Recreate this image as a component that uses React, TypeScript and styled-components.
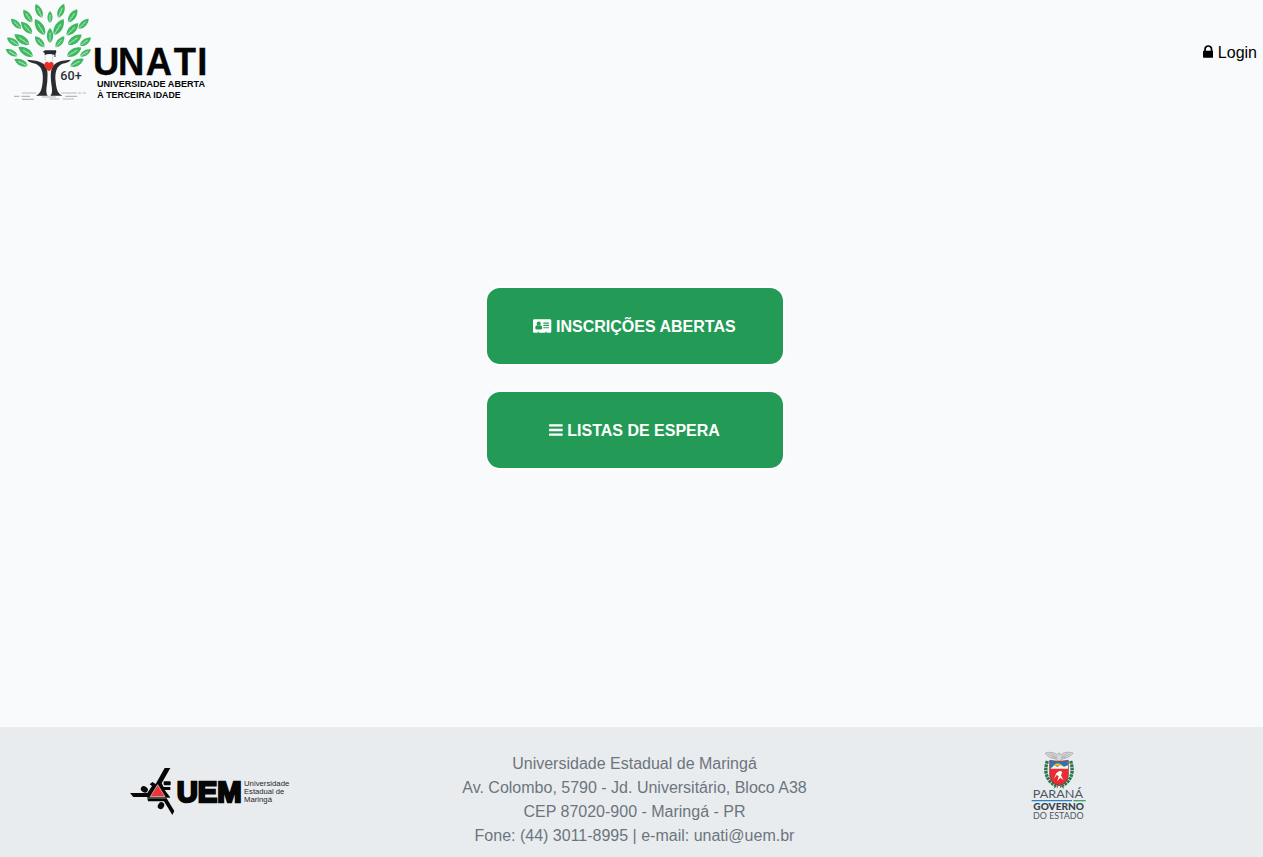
import React from "react";
import styled, { createGlobalStyle } from "styled-components";

const GlobalStyle = createGlobalStyle`
  * { box-sizing: border-box; }
  body {
    margin: 0;
    background: #f8fafc;
    font: 16px/24px "Liberation Sans", Arial, sans-serif;
  }
`;

const Page = styled.div`
  display: flex;
  flex-direction: column;
  min-height: 857px;
  overflow: hidden;
`;

const Header = styled.header`
  display: flex;
  justify-content: space-between;
  align-items: center;
  height: 105px;
  padding: 0 6px 0 4px;
`;

const LoginLink = styled.a`
  color: #000;
  text-decoration: none;
`;

const Main = styled.main`
  flex: 1;
  display: flex;
  flex-direction: column;
  align-items: center;
  gap: 24px;
  padding: 181px 0 0 7px;
`;

const ActionButton = styled.button`
  width: 300px;
  height: 80px;
  padding: 2px 1px 0 0;
  border: 2px solid #fff;
  border-radius: 15px;
  background: #239b56;
  color: #fff;
  font: bold 16px/24px "Liberation Sans", Arial, sans-serif;
  cursor: pointer;
`;

const Footer = styled.footer`
  display: grid;
  grid-template-columns: repeat(3, 425px);
  height: 130px;
  padding-top: 24px;
  margin-left: -3px;
  width: 1275px;
  background: #e9ecef;
  color: #6c757d;
  text-align: center;
`;

const FooterCell = styled.div<{ $top?: number }>`
  padding-top: ${(p) => p.$top ?? 0}px;
`;

const Glyph = styled.svg`
  height: 16px;
  vertical-align: -2.29px;
  fill: currentColor;
`;

const Drawing = styled.svg`
  display: block;
  overflow: visible;
`;

const CenteredDrawing = styled(Drawing)`
  margin: 0 auto;
`;

const LockIcon = () => (
  <Glyph viewBox="0 0 1152 1792" width="10.6" preserveAspectRatio="none">
    <path d="M320 768h512v-192q0-106-75-181t-181-75-181 75-75 181v192zm832 96v576q0 40-28 68t-68 28h-960q-40 0-68-28t-28-68v-576q0-40 28-68t68-28h32v-192q0-184 132-316t316-132 316 132 132 316v192h32q40 0 68 28t28 68z" />
  </Glyph>
);

const CardIcon = () => (
  <Glyph viewBox="0 0 2048 1792" width="18.29" preserveAspectRatio="none">
    <path d="M1024 1131q0-64-9-117.500t-29.500-103-60.500-78-97-28.500q-6 4-30 18t-37.500 21.500-35.500 17.500-43 14.500-42 4.500-42-4.500-43-14.500-35.500-17.500-37.500-21.500-30-18q-57 0-97 28.500t-60.500 78-29.500 103-9 117.500 37 106.500 91 42.500h512q54 0 91-42.500t37-106.500zm-157-520q0-94-66.500-160.500t-160.500-66.500-160.500 66.500-66.500 160.500 66.500 160.500 160.500 66.500 160.500-66.500 66.500-160.500zm925 509v-64q0-14-9-23t-23-9h-576q-14 0-23 9t-9 23v64q0 14 9 23t23 9h576q14 0 23-9t9-23zm0-260v-56q0-15-10.500-25.500t-25.500-10.500h-568q-15 0-25.500 10.500t-10.500 25.500v56q0 15 10.500 25.500t25.500 10.500h568q15 0 25.500-10.500t10.500-25.500zm0-252v-64q0-14-9-23t-23-9h-576q-14 0-23 9t-9 23v64q0 14 9 23t23 9h576q14 0 23-9t9-23zm256-320v1216q0 66-47 113t-113 47h-352v-96q0-14-9-23t-23-9h-64q-14 0-23 9t-9 23v96h-768v-96q0-14-9-23t-23-9h-64q-14 0-23 9t-9 23v96h-352q-66 0-113-47t-47-113v-1216q0-66 47-113t113-47h1728q66 0 113 47t47 113z" />
  </Glyph>
);

const BarsIcon = () => (
  <Glyph viewBox="0 0 1536 1792" width="13.71" preserveAspectRatio="none">
    {[256, 768, 1280].map((y) => (
      <rect key={y} x="0" y={y} width="1536" height="256" rx="64" />
    ))}
  </Glyph>
);

// Each leaf is [tipX, tipY, stemX, stemY].
const leaves = [
  [107, 12, 126, 53], [70, 29, 96, 67], [33, 56, 63, 86], [150, 33, 150, 69],
  [192, 11, 175, 53], [232, 28, 205, 67], [266, 56, 236, 86], [105, 57, 134, 105],
  [191, 57, 162, 105], [150, 84, 150, 129], [63, 65, 96, 101], [235, 70, 200, 106],
  [21, 113, 57, 137], [43, 103, 88, 134], [105, 109, 133, 142], [193, 109, 167, 142],
  [245, 104, 204, 134], [273, 113, 240, 137], [17, 148, 52, 168], [55, 141, 99, 169],
  [43, 178, 83, 198], [244, 143, 201, 169], [273, 148, 240, 169], [251, 177, 211, 199],
];

const Leaf = ({ points }: { points: number[] }) => {
  const [tx, ty, sx, sy] = points;
  const dx = sx - tx;
  const dy = sy - ty;
  const length = Math.hypot(dx, dy);
  const angle = (Math.atan2(dy, dx) * 180) / Math.PI;
  const w = length * 0.25;
  return (
    <g transform={`translate(${tx} ${ty}) rotate(${angle})`}>
      <path
        d={`M0 0C${length * 0.3} ${-w * 1.15} ${length * 0.8} ${-w * 1.1} ${length} 0C${length * 0.8} ${w * 1.1} ${length * 0.3} ${w * 1.15} 0 0Z`}
        fill="#3fb960"
      />
      <path d={`M${length * 0.3} 0H${length}`} stroke="#d8f1df" strokeWidth="2" />
      <path
        d={`M${length * 0.45} 0l-4 -4M${length * 0.65} 0l-4 -5M${length * 0.5} 0l-4 4M${length * 0.7} 0l-4 5`}
        stroke="#9bdaae"
        strokeWidth="1"
      />
    </g>
  );
};

const UnatiLogo = () => (
  <Drawing width="205" height="105" viewBox="12 0 615 315">
    {leaves.map((points, i) => (
      <Leaf key={i} points={points} />
    ))}
    <g stroke="#b5b7ba" strokeWidth="3.500">
      <path d="M66 279H108M184 279H230M234 279H244M248 279H258M42 289H58M64 289H90M196 289H232M66 298H102M148 297H178M188 297H222M126 291H168" />
    </g>
    <path d="M81 179C98 182 117 180 132 193C145 205 143 222 142 243C140 263 136 278 143 287H108C122 281 126 266 128 245C130 219 126 202 112 194C102 188 88 189 81 179Z" fill="#2b2b30" />
    <path d="M212 179C196 182 178 180 164 193C151 205 152 222 153 243C155 263 160 278 151 287H187C173 281 169 266 167 245C164 219 169 202 182 194C192 188 207 189 212 179Z" fill="#2b2b30" />
    <path d="M136 164C133 179 139 187 148 187C157 187 161 178 157 164" fill="#fff" stroke="#b6b8bb" strokeWidth="2" />
    <path d="M147 214C140 208 133 202 133 194C133 184 144 184 147 190C151 184 161 184 161 194C161 202 154 208 147 214Z" fill="#f12b20" />
    <path d="M128 155L136 151H168L169 156L163 165Q149 159 134 165V159Z" fill="#29292e" />
    <path d="M165 155V171" stroke="#29292e" strokeWidth="3" />
    <text x="181" y="239" fontFamily="Roboto, sans-serif" fontWeight="500" fontSize="36" textLength="64" lengthAdjust="spacingAndGlyphs" fill="#303136">60+</text>
    <g fontFamily="Liberation Sans, Arial, sans-serif" fontWeight="bold" fill="#050505">
      <text transform="scale(0.95 1)" x="294 373 460 549 623" y="225" fontSize="115" stroke="#050505" strokeWidth="1">UNATI</text>
      <text x="291" y="260" fontSize="25" textLength="324" lengthAdjust="spacingAndGlyphs">UNIVERSIDADE ABERTA</text>
      <text x="292" y="295" fontSize="25" textLength="250" lengthAdjust="spacingAndGlyphs">À TERCEIRA IDADE</text>
    </g>
  </Drawing>
);

const UemLogo = () => (
  <CenteredDrawing width="160" height="50" viewBox="30 21 480 150">
    <g fill="#070707">
      <path d="M134 24H151L125 70L131 81H151V90H134L150 111V113H82L80 111H40L30 99H82L96 78L89 73L97 66L107 72Z" />
      <path d="M82 115H140L163 153L157 165L132 124H84Z" />
      <ellipse cx="73" cy="88" rx="11" ry="9" transform="rotate(35 73 88)" />
      <rect x="131" y="64" width="21" height="12" rx="3" />
      <ellipse cx="123" cy="137" rx="9" ry="11" transform="rotate(30 123 137)" />
    </g>
    <path d="M113 74L91 110H135Z" fill="#ee343b" stroke="#f4dcdd" strokeWidth="2" />
    <g fontFamily="Liberation Sans, Arial, sans-serif">
      <text x="170" y="126" fontSize="88" fontWeight="bold" textLength="195" lengthAdjust="spacingAndGlyphs" fill="#070707" stroke="#070707" strokeWidth="7">UEM</text>
      <g fontSize="21" fill="#252628">
        <text x="372" y="79" textLength="136" lengthAdjust="spacingAndGlyphs">Universidade</text>
        <text x="372" y="103" textLength="121" lengthAdjust="spacingAndGlyphs">Estadual de</text>
        <text x="372" y="126" textLength="84" lengthAdjust="spacingAndGlyphs">Maringá</text>
      </g>
    </g>
  </CenteredDrawing>
);

const ParanaLogo = () => (
  <CenteredDrawing width="56" height="72" viewBox="36 18 168 216">
    <g stroke="#96999c" strokeWidth="2" fill="#d7d9da">
      <path d="M76 24C89 20 104 22 113 30L117 23L122 30C131 21 146 20 159 24C154 32 147 36 137 39L125 43L117 50L110 43L96 39C86 36 80 32 76 24Z" />
      <path d="M83 27L110 38M91 25L112 35M151 27L124 38M143 25L122 35M96 36L112 40M138 36L123 40" strokeWidth="1.500" />
    </g>
    <g fill="none" stroke="#28764c" strokeWidth="10" strokeDasharray="8 2">
      <path d="M82 48C71 82 80 112 114 124" />
      <path d="M152 48C163 82 154 112 120 124" />
    </g>
    <path d="M89 46Q117 52 145 46V92Q143 114 117 122Q91 114 89 92Z" fill="#ea2b32" stroke="#74383b" strokeWidth="2" />
    <path d="M90 47Q117 53 144 47V68H90Z" fill="#2d75ae" />
    <path d="M91 71L103 61L112 66L121 59L132 65L144 61V71Z" fill="#f4f4ed" />
    <path d="M99 62Q112 47 129 62Z" fill="#f2c22d" />
    <path d="M120 77L127 81L123 91L130 105L121 98L112 108L116 93L110 90L102 102L109 84Z" fill="#fff" />
    <path d="M108 123L102 130M124 123L132 130" stroke="#2c6d49" strokeWidth="3" />
    <g fontFamily="Lato, sans-serif" fill="#4b5862">
      <text x="38" y="158" fontSize="32" textLength="151" lengthAdjust="spacingAndGlyphs">PARANÁ</text>
      <text x="40" y="196" fontSize="27" fontWeight="900" textLength="152" lengthAdjust="spacingAndGlyphs" fill="#38454e">GOVERNO</text>
      <text x="39" y="222" fontSize="26" textLength="152" lengthAdjust="spacingAndGlyphs">DO ESTADO</text>
    </g>
    <path d="M35 167H156" stroke="#2584c9" strokeWidth="4" />
    <path d="M160 167H197" stroke="#39a768" strokeWidth="4" />
  </CenteredDrawing>
);

export default function App() {
  return (
    <Page>
      <GlobalStyle />
      <Header>
        <UnatiLogo />
        <LoginLink href="#"><LockIcon /> Login</LoginLink>
      </Header>
      <Main>
        <ActionButton><CardIcon /> INSCRIÇÕES ABERTAS</ActionButton>
        <ActionButton><BarsIcon /> LISTAS DE ESPERA</ActionButton>
      </Main>
      <Footer>
        <FooterCell $top={16}><UemLogo /></FooterCell>
        <FooterCell $top={1}>
          Universidade Estadual de Maringá<br />
          Av. Colombo, 5790 - Jd. Universitário, Bloco A38<br />
          CEP 87020-900 - Maringá - PR<br />
          Fone: (44) 3011-8995 | e-mail: unati@uem.br
        </FooterCell>
        <FooterCell><ParanaLogo /></FooterCell>
      </Footer>
    </Page>
  );
}
